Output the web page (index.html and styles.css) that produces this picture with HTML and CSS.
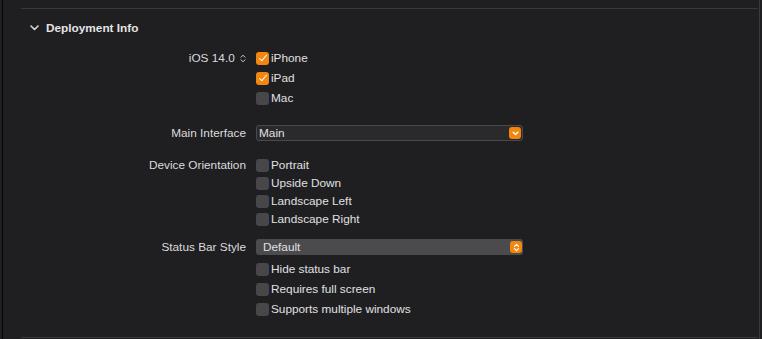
FILE: index.html
```html
<!DOCTYPE html>
<html>
<head>
    <title>Deployment Info</title>
    <link rel="stylesheet" href="styles.css">
</head>
<body>
    <div class="window">
        <div class="gutter"></div>
        <div class="divider"></div>
        <div class="pane">
            <div class="rule"></div>

            <div class="section-header">
                <svg class="disclosure" width="9" height="6" viewBox="0 0 9 6">
                    <path d="M1 1 L4.5 4.5 L8 1" fill="none" stroke="#d8d8d8" stroke-width="1.6" stroke-linecap="round" stroke-linejoin="round"/>
                </svg>
                <span>Deployment Info</span>
            </div>

            <div class="field field-ios">
                <div class="label">
                    iOS 14.0
                    <svg class="stepper" width="6" height="9" viewBox="0 0 6 9">
                        <path d="M1 3.2 L3 1.2 L5 3.2 M1 5.8 L3 7.8 L5 5.8" fill="none" stroke="#cfcfcf" stroke-width="1" stroke-linecap="round" stroke-linejoin="round"/>
                    </svg>
                </div>
                <div class="controls">
                    <label class="check check-20"><span class="box on"></span>iPhone</label>
                    <label class="check check-20"><span class="box on"></span>iPad</label>
                    <label class="check check-20"><span class="box"></span>Mac</label>
                </div>
            </div>

            <div class="field field-main">
                <div class="label label-popup">Main Interface</div>
                <div class="controls">
                    <div class="popup combo">
                        <span>Main</span>
                        <span class="popup-btn">
                            <svg width="7" height="5" viewBox="0 0 7 5">
                                <path d="M1.2 1.2 L3.5 3.5 L5.8 1.2" fill="none" stroke="#fff" stroke-width="1.3" stroke-linecap="round" stroke-linejoin="round"/>
                            </svg>
                        </span>
                    </div>
                </div>
            </div>

            <div class="field field-orient">
                <div class="label label-check">Device Orientation</div>
                <div class="controls">
                    <label class="check check-18"><span class="box"></span>Portrait</label>
                    <label class="check check-18"><span class="box"></span>Upside Down</label>
                    <label class="check check-18"><span class="box"></span>Landscape Left</label>
                    <label class="check check-18"><span class="box"></span>Landscape Right</label>
                </div>
            </div>

            <div class="field field-status">
                <div class="label label-popup">Status Bar Style</div>
                <div class="controls">
                    <div class="popup select">
                        <span>Default</span>
                        <span class="popup-btn">
                            <svg width="7" height="9" viewBox="0 0 7 9">
                                <path d="M1.5 3.3 L3.5 1.3 L5.5 3.3 M1.5 5.7 L3.5 7.7 L5.5 5.7" fill="none" stroke="#fff" stroke-width="1.2" stroke-linecap="round" stroke-linejoin="round"/>
                            </svg>
                        </span>
                    </div>
                </div>
            </div>

            <div class="field field-bar">
                <div class="label"></div>
                <div class="controls">
                    <label class="check check-20"><span class="box"></span>Hide status bar</label>
                    <label class="check check-20"><span class="box"></span>Requires full screen</label>
                    <label class="check check-20"><span class="box"></span>Supports multiple windows</label>
                </div>
            </div>

            <div class="rule rule-bottom"></div>
        </div>
        <div class="edge"></div>
        <div class="gutter"></div>
    </div>
</body>
</html>
```

FILE: styles.css
```css
body {
    margin: 0;
    background-color: #1f1f22;
    font-family: "Liberation Sans", Arial, sans-serif;
    font-size: 11.8px;
    color: #e0e0e0;
    overflow: hidden;
}
.window {
    display: flex;
    height: 339px;
}
.gutter {
    width: 2px;
    flex: none;
}
.divider {
    width: 1px;
    flex: none;
    background-color: #050505;
}
.edge {
    width: 1px;
    flex: none;
    background-color: #3b3b3e;
}
.pane {
    flex: 1;
    display: flex;
    flex-direction: column;
    padding-top: 8px;
}
.rule {
    height: 1px;
    margin-left: 18px;
    margin-right: 1px;
    background-color: #38383b;
}
.rule-bottom {
    margin-top: 18px;
}
.section-header {
    display: flex;
    align-items: center;
    height: 18px;
    margin-top: 10px;
    font-weight: bold;
    color: #e4e4e4;
}
.disclosure {
    margin-left: 27px;
    margin-right: 7px;
}
.field {
    display: flex;
}
.label {
    width: 253px;
    flex: none;
    text-align: right;
    padding-right: 10px;
    box-sizing: border-box;
    line-height: 20px;
    color: #dcdcdc;
}
.label-popup {
    line-height: 16px;
}
.label-check {
    line-height: 18px;
}
.stepper {
    margin-left: 2px;
    vertical-align: -1px;
}
.controls {
    display: flex;
    flex-direction: column;
}
.field-ios {
    margin-top: 11px;
}
.field-main {
    margin-top: 17px;
}
.field-orient {
    margin-top: 15px;
}
.field-status {
    margin-top: 11px;
}
.field-bar {
    margin-top: 4px;
}
.check {
    display: flex;
    align-items: center;
    color: #e0e0e0;
}
.check-20 {
    height: 20px;
}
.check-18 {
    height: 18px;
}
.box {
    width: 13px;
    height: 13px;
    box-sizing: border-box;
    border-radius: 3px;
    background-color: #47474a;
    margin-right: 2px;
    position: relative;
}
.box.on {
    background-color: #f3860e;
}
.box.on::after {
    content: "";
    position: absolute;
    left: 4.5px;
    top: 1.5px;
    width: 3px;
    height: 7px;
    border: solid #fff;
    border-width: 0 1.7px 1.7px 0;
    transform: rotate(40deg);
}
.popup {
    width: 267px;
    height: 16px;
    box-sizing: border-box;
    border-radius: 3px;
    display: flex;
    align-items: center;
    justify-content: space-between;
    padding-right: 1px;
}
.combo {
    background-color: #2a2a2d;
    border: 1px solid #4a4a4d;
    padding-left: 2px;
}
.select {
    background-color: #4b4b4e;
    padding-left: 7px;
}
.popup-btn {
    width: 12px;
    height: 12px;
    border-radius: 3px;
    background-color: #f3860e;
    display: flex;
    align-items: center;
    justify-content: center;
}
```
